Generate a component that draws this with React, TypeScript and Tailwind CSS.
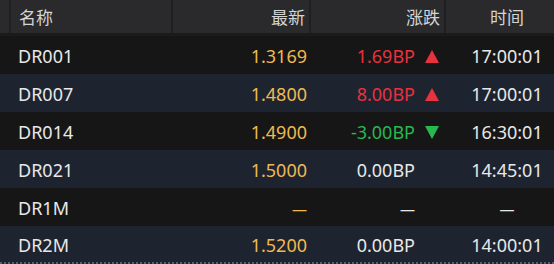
import React from 'react';

type Row = {
  name: string;
  price: string;
  change: string;
  dir: 'up' | 'down' | 'flat' | 'none';
  time: string;
};

const ROWS: Row[] = [
  { name: 'DR001', price: '1.3169', change: '1.69BP', dir: 'up', time: '17:00:01' },
  { name: 'DR007', price: '1.4800', change: '8.00BP', dir: 'up', time: '17:00:01' },
  { name: 'DR014', price: '1.4900', change: '-3.00BP', dir: 'down', time: '16:30:01' },
  { name: 'DR021', price: '1.5000', change: '0.00BP', dir: 'flat', time: '14:45:01' },
  { name: 'DR1M', price: '—', change: '—', dir: 'none', time: '—' },
  { name: 'DR2M', price: '1.5200', change: '0.00BP', dir: 'flat', time: '14:00:01' },
];

const FONT = "font-['Noto_Sans','Noto_Sans_CJK_SC',sans-serif]";

function Arrow({ dir }: { dir: Row['dir'] }) {
  if (dir === 'up')
    return (
      <svg width="14" height="13" viewBox="0 0 14 13">
        <polygon points="7,0 14,13 0,13" fill="#e8323e" />
      </svg>
    );
  if (dir === 'down')
    return (
      <svg width="14" height="13" viewBox="0 0 14 13">
        <polygon points="0,0 14,0 7,13" fill="#27b84f" />
      </svg>
    );
  return null;
}

// the "no data" dash is shorter than a normal em dash
function Value({ v }: { v: string }) {
  return v === '—' ? <span className="text-[15px]">—</span> : <>{v}</>;
}

export default function App() {
  return (
    <div className={`w-[554px] h-[264px] overflow-hidden bg-[#161616] ${FONT}`}>
      {/* Header */}
      <div className="h-[36px] bg-[#2a2a2c] border-b-[3px] border-[#1b1b1c] grid grid-cols-[11px_162px_138px_135px_108px] text-[17px] text-[#d4d4d4]">
        <div className="border-r-2 border-[#1f1f20]" />
        <div className="flex items-center pt-[2px] pl-[8px] border-r-2 border-[#1f1f20]">名称</div>
        <div className="flex items-center pt-[2px] justify-end pr-[4px] border-r-2 border-[#1f1f20]">最新</div>
        <div className="flex items-center pt-[2px] justify-end pr-[4px] border-r-2 border-[#1f1f20]">涨跌</div>
        <div className="flex items-center pt-[2px] justify-end pr-[11px]">
          <span className="w-[72px] text-center">时间</span>
        </div>
      </div>

      {/* Rows */}
      {ROWS.map((r, i) => (
        <div
          key={r.name}
          className={`h-[38px] pt-[3px] grid grid-cols-[173px_138px_135px_108px] items-center text-[18px] ${
            i % 2 === 0 ? 'bg-[#161616]' : 'bg-[#1d2430]'
          } ${i === ROWS.length - 1 ? 'border-b-2 border-dotted border-[#566072]' : ''}`}
        >
          <div className="pl-[18px] text-[#e8e8e8]">{r.name}</div>
          <div className="text-right pr-[4px] text-[#f0b94f]">
            <Value v={r.price} />
          </div>
          <div className="flex items-center justify-end pr-[7px]">
            <span
              className={
                r.dir === 'up'
                  ? 'text-[#e8323e]'
                  : r.dir === 'down'
                  ? 'text-[#27b84f]'
                  : 'text-[#e8e8e8]'
              }
            >
              <Value v={r.change} />
            </span>
            <span className="w-[14px] ml-[10px] flex items-center">
              <Arrow dir={r.dir} />
            </span>
          </div>
          <div className="flex justify-end pr-[11px] text-[#e8e8e8]">
            <span className="w-[72px] text-center">
              <Value v={r.time} />
            </span>
          </div>
        </div>
      ))}
    </div>
  );
}
